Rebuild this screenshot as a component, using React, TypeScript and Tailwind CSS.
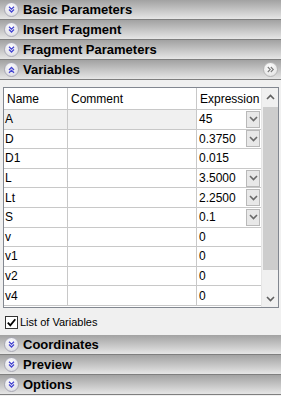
import React from 'react'

const rows = [
  { name: 'A', expr: '45', dd: true, sel: true },
  { name: 'D', expr: '0.3750', dd: true },
  { name: 'D1', expr: '0.015' },
  { name: 'L', expr: '3.5000', dd: true },
  { name: 'Lt', expr: '2.2500', dd: true },
  { name: 'S', expr: '0.1', dd: true },
  { name: 'v', expr: '0' },
  { name: 'v1', expr: '0' },
  { name: 'v2', expr: '0' },
  { name: 'v4', expr: '0' },
]

function Chevrons({ up }: { up?: boolean }) {
  const d = up
    ? 'M2 5 L4.5 2.5 L7 5 M2 7.8 L4.5 5.3 L7 7.8'
    : 'M2 1.7 L4.5 4.2 L7 1.7 M2 4.5 L4.5 7 L7 4.5'
  return (
    <svg width="9" height="9" viewBox="0 0 9 9">
      <path d={d} stroke="#4444d0" strokeWidth="1.3" fill="none" />
    </svg>
  )
}

function Header({ title, up, more }: { title: string; up?: boolean; more?: boolean }) {
  return (
    <div className="h-[20px] flex items-center border-b border-[#7f7f7f] bg-linear-to-b from-[#a2a2a2] to-[#e6e6e6] pl-[4px] pr-[3px]">
      <span className="w-[15px] h-[15px] rounded-full border border-[#a9a9b4] bg-[radial-gradient(circle_at_45%_35%,#ffffff,#d4d4de)] flex items-center justify-center">
        <Chevrons up={up} />
      </span>
      <span className="ml-[4px] font-bold text-[13px] text-black leading-none">{title}</span>
      {more && (
        <span className="ml-auto w-[15px] h-[15px] rounded-full border border-[#b5b5b5] bg-[radial-gradient(circle_at_45%_35%,#ffffff,#dcdcdc)] flex items-center justify-center">
          <svg width="9" height="9" viewBox="0 0 9 9">
            <path d="M1.8 2 L4.3 4.5 L1.8 7 M4.8 2 L7.3 4.5 L4.8 7" stroke="#7a7a7a" strokeWidth="1.1" fill="none" />
          </svg>
        </span>
      )}
    </div>
  )
}

function SmallChevron({ up, color = '#6d6d6d' }: { up?: boolean; color?: string }) {
  return (
    <svg width="9" height="6" viewBox="0 0 9 6">
      <path d={up ? 'M1 5 L4.5 1.5 L8 5' : 'M1 1 L4.5 4.5 L8 1'} stroke={color} strokeWidth="1.6" fill="none" />
    </svg>
  )
}

export default function App() {
  return (
    <div
      className="w-[281px] h-[396px] bg-[#f0f0f0] flex flex-col overflow-hidden text-black"
      style={{ fontFamily: '"Liberation Sans", Arial, sans-serif' }}
    >
      <Header title="Basic Parameters" />
      <Header title="Insert Fragment" />
      <Header title="Fragment Parameters" />
      <Header title="Variables" up more />

      {/* panel content */}
      <div className="h-[255px] pl-[3px] pr-[2px] pt-[7px] flex flex-col">
        <div className="h-[221px] border border-[#828790] bg-white flex text-[12px]">
          <div className="flex-1 flex flex-col overflow-hidden">
            <div className="h-[22px] flex border-b border-[#c8c8c8] shrink-0">
              <div className="w-[64px] border-r border-[#c8c8c8] pl-[3px] flex items-center">Name</div>
              <div className="w-[129px] border-r border-[#c8c8c8] pl-[3px] flex items-center">Comment</div>
              <div className="flex-1 pl-[3px] flex items-center">Expression</div>
            </div>
            {rows.map((r) => (
              <div key={r.name} className="h-[19.6px] shrink-0 flex border-b border-[#c8c8c8]">
                <div className={`w-[64px] border-r border-[#c8c8c8] pl-[1px] flex items-center ${r.sel ? 'bg-[#f0f0f0]' : ''}`}>{r.name}</div>
                <div className={`w-[129px] border-r border-[#c8c8c8] ${r.sel ? 'bg-[#f0f0f0]' : ''}`} />
                <div className="flex-1 pl-[2px] flex items-center">
                  <span className="flex-1">{r.expr}</span>
                  {r.dd && (
                    <span className="w-[14px] h-[17px] mr-[1px] bg-[#e8e8e8] border border-[#b9b9b9] flex items-center justify-center">
                      <SmallChevron color="#6a6a6a" />
                    </span>
                  )}
                </div>
              </div>
            ))}
          </div>
          {/* scrollbar */}
          <div className="w-[17px] bg-[#f0f0f0] border-l border-[#e6e6e6] flex flex-col items-center">
            <div className="h-[17px] flex items-center justify-center">
              <SmallChevron up color="#606060" />
            </div>
            <div className="w-[15px] h-[163px] mt-[2px] bg-[#cdcdcd]" />
            <div className="flex-1" />
            <div className="h-[17px] flex items-center justify-center">
              <SmallChevron color="#606060" />
            </div>
          </div>
        </div>
        <label className="mt-[6px] ml-[2px] flex items-center gap-[2px] text-[11px]">
          <span className="w-[13px] h-[13px] border border-[#333] bg-white flex items-center justify-center">
            <svg width="11" height="11" viewBox="0 0 11 11">
              <path d="M1.8 5.6 L4.3 8.3 L9.3 2.2" stroke="#000" strokeWidth="1.8" fill="none" />
            </svg>
          </span>
          <span>List of Variables</span>
        </label>
      </div>

      <Header title="Coordinates" />
      <Header title="Preview" />
      <Header title="Options" />
    </div>
  )
}
